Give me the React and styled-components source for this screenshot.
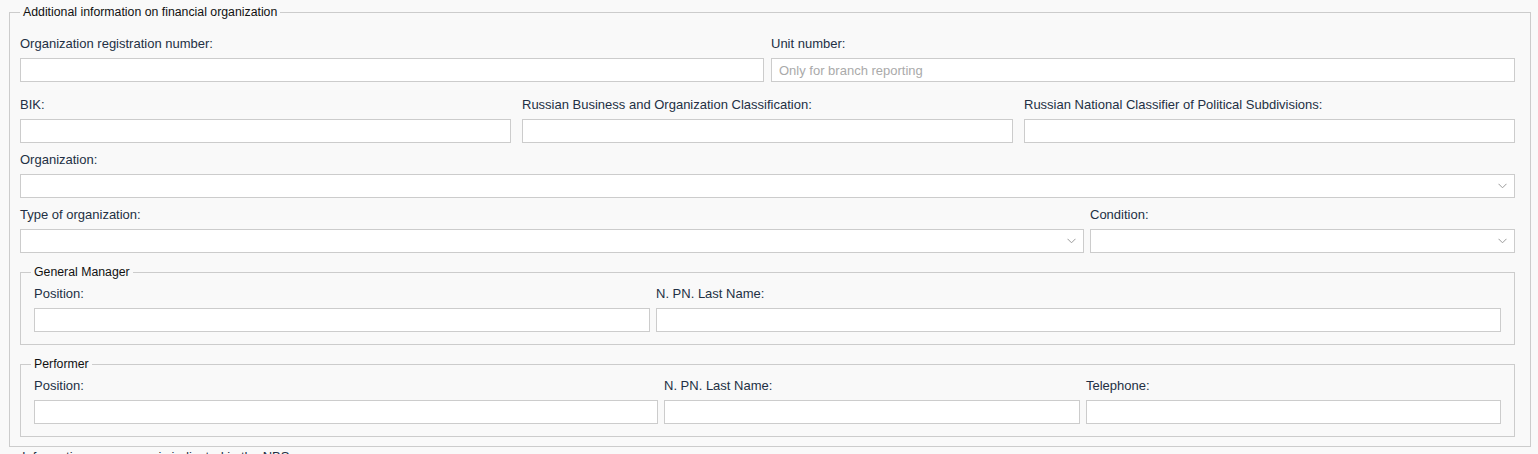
import React from "react";
import styled, { createGlobalStyle } from "styled-components";

const GlobalStyle = createGlobalStyle`
  html, body {
    margin: 0;
    padding: 0;
    background: #f9f9f9;
  }
  body {
    font-family: "Liberation Sans", Arial, sans-serif;
    font-size: 13px;
    color: #233044;
  }
`;

const Page = styled.div`
  padding: 5px 7px 0 9px;
  height: 454px;
  box-sizing: border-box;
  overflow: hidden;
`;

const Group = styled.fieldset`
  margin: ${(props) => (props.nested ? "12px 0 0" : "0")};
  padding: ${(props) => (props.nested ? "6px 13px 12px 13px" : "16px 15px 9px 10px")};
  border: 1px solid #cccccc;
  min-width: 0;
`;

const Legend = styled.legend`
  padding: 0 3px;
  margin-left: ${(props) => props.shift || 0}px;
  font-size: 12.3px;
  line-height: 15px;
  color: #111111;
`;

const Row = styled.div`
  display: grid;
  grid-template-columns: ${(props) => props.cols};
  column-gap: ${(props) => props.gap || 7}px;
  margin-top: ${(props) => props.top || 0}px;
`;

const Field = styled.div`
  display: flex;
  flex-direction: column;
  min-width: 0;
`;

const Label = styled.label`
  display: block;
  font-size: 13px;
  line-height: 15px;
  margin-bottom: 7px;
  color: #233044;
  white-space: nowrap;
`;

const Input = styled.input`
  box-sizing: border-box;
  width: 100%;
  height: 24px;
  margin: 0;
  padding: 0 7px;
  border: 1px solid #cccccc;
  border-radius: 0;
  background: #ffffff;
  font-family: "Liberation Sans", Arial, sans-serif;
  font-size: 13px;
  color: #233044;
  outline: none;
  &::placeholder {
    color: #aaaaaa;
  }
`;

const SelectBox = styled.div`
  box-sizing: border-box;
  height: 24px;
  border: 1px solid #cccccc;
  background: #ffffff;
  display: flex;
  align-items: center;
  justify-content: flex-end;
  padding-right: 7px;
`;

const Chevron = () => (
  <svg width="9" height="6" viewBox="0 0 9 6">
    <path d="M0.5 0.8 L4.5 4.8 L8.5 0.8" fill="none" stroke="#9a9a9a" strokeWidth="1" />
  </svg>
);

const Note = styled.div`
  margin: 2px 0 0 13px;
  font-size: 13px;
  line-height: 15px;
  color: #233044;
  white-space: nowrap;
`;

const TextField = ({ label, placeholder }) => (
  <Field>
    <Label>{label}</Label>
    <Input placeholder={placeholder} />
  </Field>
);

const SelectField = ({ label }) => (
  <Field>
    <Label>{label}</Label>
    <SelectBox>
      <Chevron />
    </SelectBox>
  </Field>
);

const App = () => (
  <Page>
    <GlobalStyle />
    <Group>
      <Legend>Additional information on financial organization</Legend>
      <Row cols="1fr 1fr">
        <TextField label="Organization registration number:" />
        <TextField label="Unit number:" placeholder="Only for branch reporting" />
      </Row>
      <Row cols="1fr 1fr 1fr" gap={11} top={15}>
        <TextField label="BIK:" />
        <TextField label="Russian Business and Organization Classification:" />
        <TextField label="Russian National Classifier of Political Subdivisions:" />
      </Row>
      <Row cols="1fr" top={9}>
        <SelectField label="Organization:" />
      </Row>
      <Row cols="1064fr 425fr" gap={6} top={9}>
        <SelectField label="Type of organization:" />
        <SelectField label="Condition:" />
      </Row>
      <Group nested>
        <Legend shift={-3}>General Manager</Legend>
        <Row cols="616fr 845fr" gap={6}>
          <TextField label="Position:" />
          <TextField label="N. PN. Last Name:" />
        </Row>
      </Group>
      <Group nested>
        <Legend shift={-3}>Performer</Legend>
        <Row cols="624fr 416fr 415fr" gap={6}>
          <TextField label="Position:" />
          <TextField label="N. PN. Last Name:" />
          <TextField label="Telephone:" />
        </Row>
      </Group>
    </Group>
    <Note>Information on persons is indicated in the NBS</Note>
  </Page>
);

export default App;
